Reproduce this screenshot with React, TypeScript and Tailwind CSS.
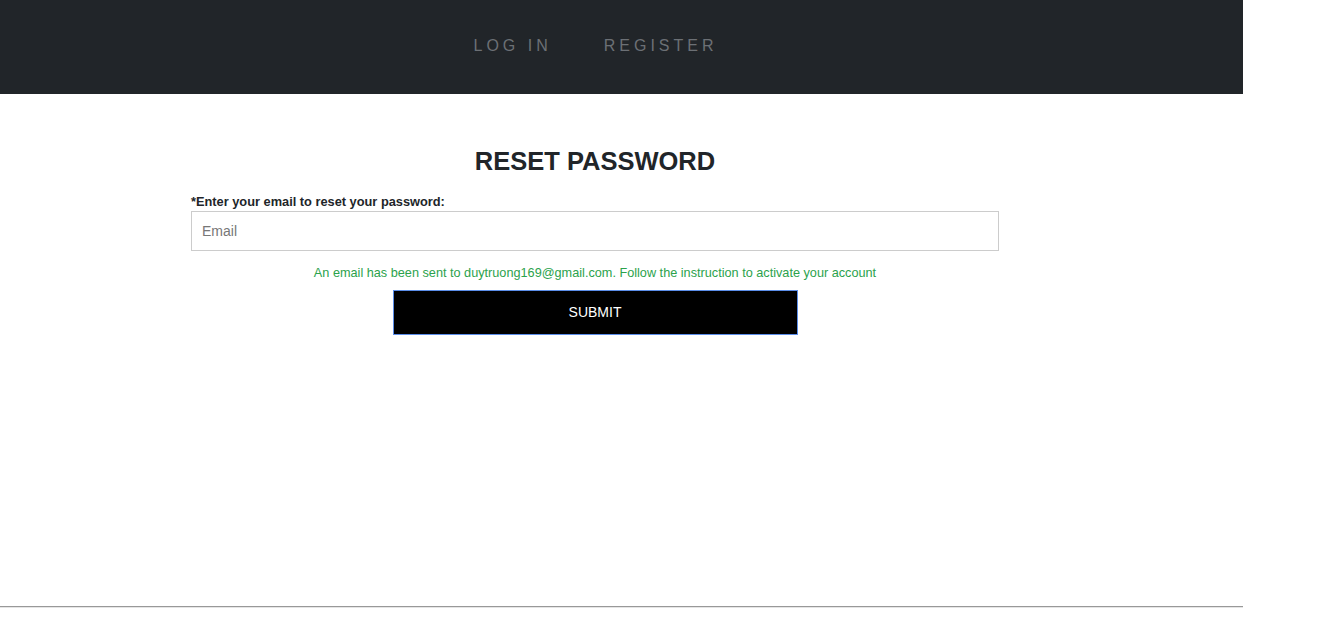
import React from "react";

export default function App() {
  return (
    <div className="w-[1243px] min-h-[640px] bg-white font-['Liberation_Sans',Arial,sans-serif] flex flex-col">
      <header className="h-[94px] bg-[#212529] flex items-center justify-center pb-[2px]">
        <nav className="flex items-center gap-[52px] mr-[52px]">
          <a className="text-[16px] tracking-[4px] text-[#6c7075] uppercase">Log in</a>
          <a className="text-[16px] tracking-[4px] text-[#6c7075] uppercase">Register</a>
        </nav>
      </header>

      <main className="flex-1 pt-[52px]">
        <div className="w-[808px] ml-[191px] flex flex-col">
          <h1 className="text-[25.5px] font-bold text-[#212529] text-center leading-[30px]">
            RESET PASSWORD
          </h1>
          <label className="mt-[18px] text-[12.8px] font-bold text-[#212529] leading-[16px]">
            *Enter your email to reset your password:
          </label>
          <input
            type="email"
            placeholder="Email"
            className="mt-[1px] h-[40px] w-full border border-[#cccccc] px-[10px] text-[14px] placeholder:text-[#777] outline-none"
          />
          <p className="mt-[14px] text-center text-[12.7px] text-[#2ba24c] leading-[16px]">
            An email has been sent to duytruong169@gmail.com. Follow the instruction to activate your account
          </p>
          <div className="mt-[9px] flex justify-center">
            <button className="w-[405px] h-[45px] bg-black border border-[#5b8de8] text-white text-[14px] uppercase">
              Submit
            </button>
          </div>
        </div>
      </main>

      <hr className="mb-[32px] border-t border-t-[#999] border-b border-b-[#e5e5e5]" />
    </div>
  );
}
